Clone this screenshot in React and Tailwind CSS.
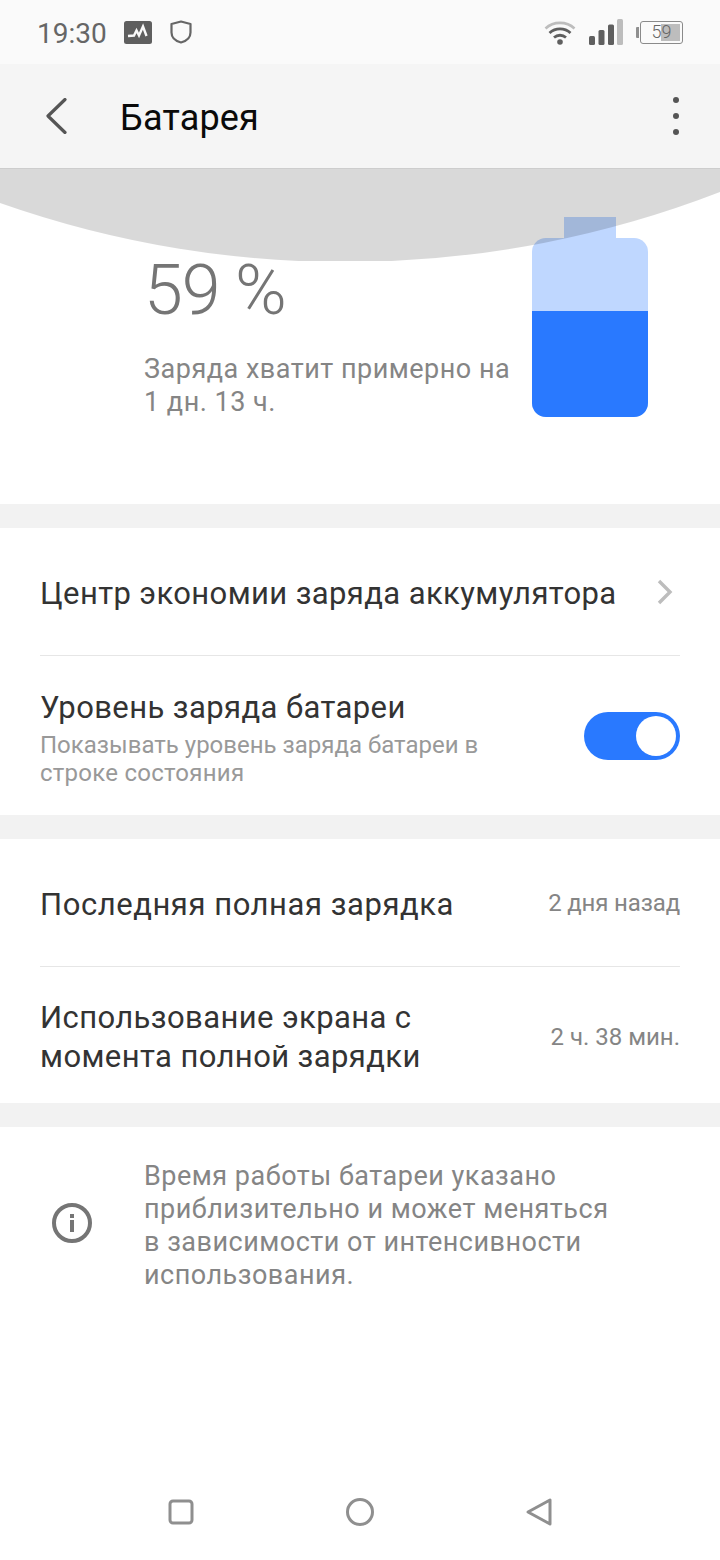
const font = { fontFamily: "Roboto, sans-serif" };

function StatusBar() {
  return (
    <div className="h-16 bg-[#fafafa] flex items-center pl-[37px] pr-[37px] text-[#666]">
      <span className="text-[28px] leading-none mt-[3px]">19:30</span>
      <svg className="ml-[17px]" width="28" height="23" viewBox="0 0 28 23">
        <rect width="28" height="23" rx="2.5" fill="#5f5f5f" />
        <path d="M4 15l6-.5 2.500-5 2.500 5 4-9 3.500 9.500" fill="none" stroke="#fafafa" strokeWidth="2.400" />
      </svg>
      <svg className="ml-[18px]" width="22" height="24" viewBox="0 0 22 24">
        <path d="M11 1.500 20.500 4v8.500c0 5-4 8.500-9.500 10C5.500 21 1.500 17.500 1.500 12.500V4z" fill="none" stroke="#666" strokeWidth="2.200" strokeLinejoin="round" />
      </svg>
      <svg className="ml-auto" width="32" height="25" viewBox="0 0 32 25">
        <path d="M1.500 8.500C9.500 1 22.500 1 30.500 8.500" fill="none" stroke="#bdbdbd" strokeWidth="2.600" />
        <path d="M5.500 13C11.500 7.500 20.500 7.500 26.500 13" fill="none" stroke="#5f5f5f" strokeWidth="2.800" />
        <path d="M10 17.500C13.500 14.500 18.500 14.500 22 17.500" fill="none" stroke="#5f5f5f" strokeWidth="2.800" />
        <circle cx="16" cy="22" r="2.800" fill="#5f5f5f" />
      </svg>
      <svg className="ml-[13px]" width="34" height="26" viewBox="0 0 34 26">
        <rect x="0" y="17" width="6" height="9" rx="1.500" fill="#5f5f5f" />
        <rect x="9.500" y="11" width="6" height="15" rx="1.500" fill="#5f5f5f" />
        <rect x="19" y="5.500" width="6" height="20.500" rx="1.500" fill="#5f5f5f" />
        <rect x="28" y="0" width="6" height="26" rx="1.500" fill="#bdbdbd" />
      </svg>
      <div className="ml-[13px] flex items-center">
        <div className="w-[3px] h-[11px] bg-[#8f8f8f] rounded-l-[1px] mr-px" />
        <div className="relative w-[43px] h-[23px] border-[1.5px] border-[#8a8a8a] rounded-[3px] p-[2px] flex justify-end">
          <div className="w-[19px] bg-[#bdbdbd]" />
          <span className="absolute inset-0 flex items-center justify-center text-[18px] font-light leading-none text-[#666]">59</span>
        </div>
      </div>
    </div>
  );
}

function Header() {
  return (
    <div className="h-[105px] bg-[#f5f5f5] border-b border-[#cdcdcd] flex items-center pl-[45px] pr-[41px]">
      <svg width="22" height="36" viewBox="0 0 22 36">
        <path d="M20 1.500 3 18 20 34.500" fill="none" stroke="#555" strokeWidth="3.200" strokeLinecap="round" strokeLinejoin="round" />
      </svg>
      <span className="ml-[53px] mt-[4px] text-[36px] leading-none text-[#0a0a0a] tracking-[0.2px]">Батарея</span>
      <div className="ml-auto flex flex-col gap-[10px]">
        <div className="w-[6px] h-[6px] rounded-full bg-[#555]" />
        <div className="w-[6px] h-[6px] rounded-full bg-[#555]" />
        <div className="w-[6px] h-[6px] rounded-full bg-[#555]" />
      </div>
    </div>
  );
}

function Hero() {
  return (
    <div className="relative h-[335px] bg-white flex pl-[144px] pr-[72px] overflow-hidden">
      <div className="flex-1 pt-[81px]">
        <div className="text-[70px] font-light leading-[80px] text-[#757575] tracking-[-1.2px]">59 %</div>
        <p className="mt-[23px] text-[27px] leading-[33px] text-[#858585] tracking-[0.5px] whitespace-nowrap">
          Заряда хватит примерно на
          <br />
          1 дн. 13 ч.
        </p>
      </div>
      <div className="w-[116px] pt-[48px] flex flex-col items-center">
        <div className="w-[52px] h-[21px] bg-[#bfd7ff]" />
        <div className="w-[116px] h-[179px] rounded-[14px] overflow-hidden bg-[#bfd7ff] flex flex-col justify-end">
          <div className="h-[106px] bg-[#2979ff]" />
        </div>
      </div>
      <svg className="absolute top-0 left-0" width="720" height="92" viewBox="0 0 720 92">
        <path d="M0 34A1038 1038 0 0 0 720 23V0H0Z" fill="#000" fillOpacity="0.15" />
      </svg>
    </div>
  );
}

function Divider() {
  return <div className="h-6 bg-[#f2f2f2]" />;
}

function InfoIcon() {
  return (
    <svg width="40" height="40" viewBox="0 0 40 40">
      <circle cx="20" cy="20" r="18" fill="none" stroke="#757575" strokeWidth="4" />
      <rect x="18" y="11" width="4" height="4" fill="#757575" />
      <rect x="18" y="17" width="4" height="12" fill="#757575" />
    </svg>
  );
}

export default function App() {
  return (
    <div className="w-[720px] h-[1560px] bg-white flex flex-col" style={font}>
      <StatusBar />
      <Header />
      <Hero />
      <Divider />

      <div className="px-10">
        <div className="h-[128px] border-b border-[#e6e6e6] flex items-center justify-between">
          <span className="mt-[3px] text-[31px] leading-none text-[#333] tracking-[0.39px]">Центр экономии заряда аккумулятора</span>
          <svg className="mr-[7px]" width="16" height="26" viewBox="0 0 16 26">
            <path d="M2 2l11 11L2 24" fill="none" stroke="#bdbdbd" strokeWidth="3.400" />
          </svg>
        </div>
        <div className="h-[159px] flex items-center justify-between">
          <div className="mt-[3px]">
            <div className="text-[31px] leading-[40px] text-[#333] tracking-[0.4px]">Уровень заряда батареи</div>
            <div className="mt-[3px] text-[24px] leading-[28px] text-[#999]">
              Показывать уровень заряда батареи в
              <br />
              <span className="tracking-[0.25px]">строке состояния</span>
            </div>
          </div>
          <div className="w-24 h-12 rounded-full bg-[#2979ff] flex items-center justify-end pr-1">
            <div className="w-10 h-10 rounded-full bg-white" />
          </div>
        </div>
      </div>

      <Divider />

      <div className="px-10">
        <div className="h-[128px] border-b border-[#e6e6e6] flex items-center justify-between">
          <span className="mt-[3px] text-[31px] leading-none text-[#333] tracking-[0.55px]">Последняя полная зарядка</span>
          <span className="mt-[1px] text-[24px] leading-none text-[#858585] tracking-[-0.15px]">2 дня назад</span>
        </div>
        <div className="h-[136px] flex items-center justify-between">
          <span className="mt-[3px] text-[31px] leading-[39px] text-[#333] tracking-[0.4px]">
            Использование экрана с
            <br />
            момента полной зарядки
          </span>
          <span className="mt-[3px] text-[24px] leading-none text-[#858585]">2 ч. 38 мин.</span>
        </div>
      </div>

      <Divider />

      <div className="flex pl-[52px] pt-[33px]">
        <div className="mt-[43px]">
          <InfoIcon />
        </div>
        <p className="ml-[52px] text-[27px] leading-[33px] text-[#858585] tracking-[0.5px]">
          Время работы батареи указано
          <br />
          приблизительно и может меняться
          <br />
          в зависимости от интенсивности
          <br />
          использования.
        </p>
      </div>

      <div className="mt-auto h-[79px] flex items-start pl-[168px] pt-[18px]">
        <svg width="26" height="26" viewBox="0 0 26 26">
          <rect x="2" y="2" width="22" height="22" rx="3" fill="none" stroke="#8f8f8f" strokeWidth="3" />
        </svg>
        <svg className="ml-[151px] -mt-[2px]" width="30" height="30" viewBox="0 0 30 30">
          <circle cx="15" cy="15" r="12.500" fill="none" stroke="#8f8f8f" strokeWidth="3" />
        </svg>
        <svg className="ml-[150px] -mt-[2px]" width="28" height="30" viewBox="0 0 28 30">
          <path d="M25 3v24L3 15z" fill="none" stroke="#8f8f8f" strokeWidth="3" strokeLinejoin="round" />
        </svg>
      </div>
    </div>
  );
}
